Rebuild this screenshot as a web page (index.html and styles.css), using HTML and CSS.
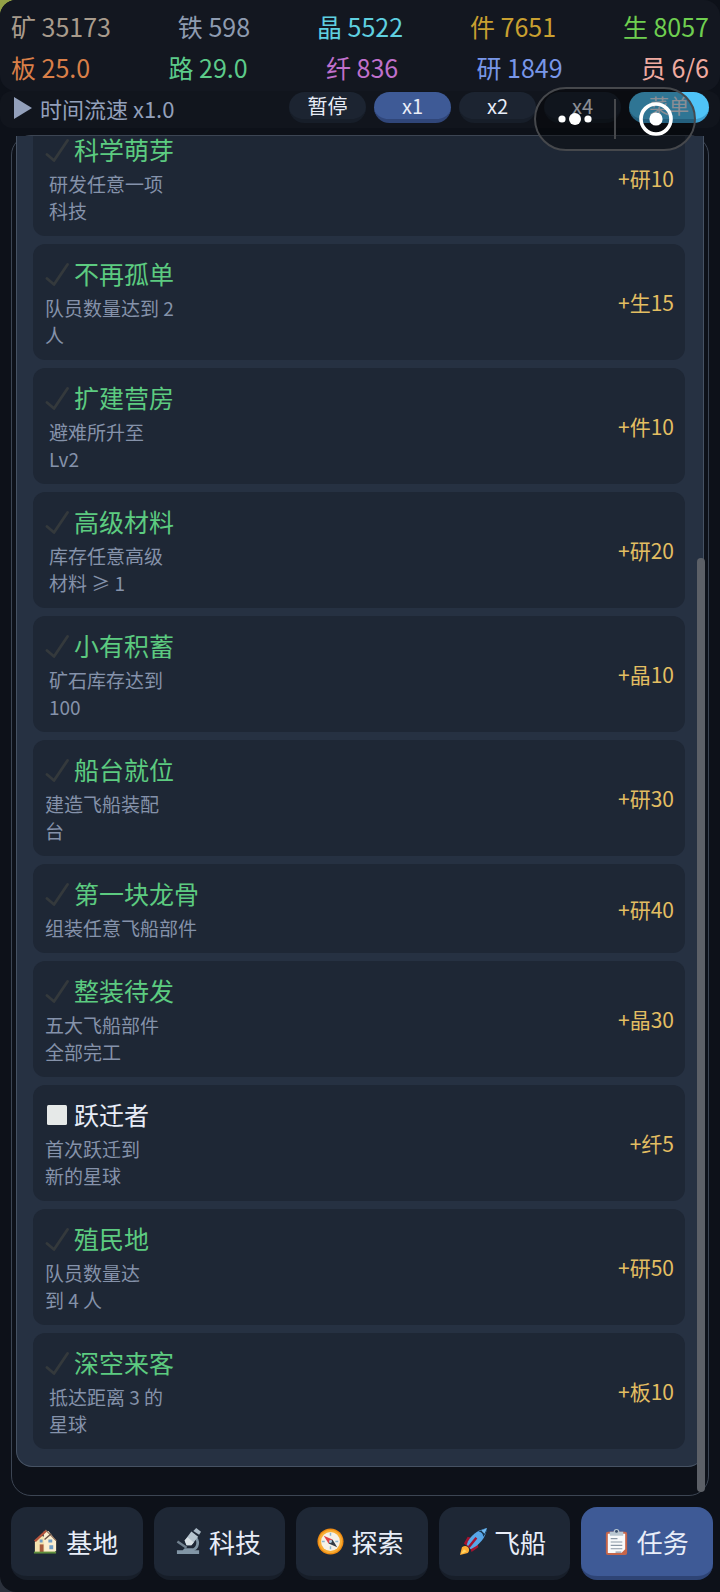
FILE: index.html
```html
<!DOCTYPE html>
<html lang="zh-CN">
<head>
<meta charset="utf-8">
<meta name="viewport" content="width=device-width, initial-scale=1">
<title>任务</title>
<link rel="stylesheet" href="styles.css">
</head>
<body>
<svg class="defs" aria-hidden="true">
  <symbol id="check" viewBox="0 0 24 24"><path d="M2 16.500 9 22.500 22.500 2.500" fill="none" stroke="#34393c" stroke-width="2.800" stroke-linejoin="round" stroke-linecap="round"/></symbol>
</svg>
<div class="app">
  <header class="resources">
    <div class="res-row">
      <span class="ore">矿 35173</span><span class="iron">铁 598</span><span class="crystal">晶 5522</span><span class="part">件 7651</span><span class="life">生 8057</span>
    </div>
    <div class="res-row">
      <span class="board">板 25.0</span><span class="circuit">路 29.0</span><span class="fiber">纤 836</span><span class="research">研 1849</span><span class="crew">员 6/6</span>
    </div>
  </header>
  <section class="speed">
    <div class="speed-label"><svg class="play" viewBox="0 0 18 22"><path d="M0 0 18 11 0 22Z" fill="#93a0bb"/></svg><span>时间流速 x1.0</span></div>
    <div class="speed-buttons">
      <button class="pill">暂停</button><button class="pill active">x1</button><button class="pill">x2</button><button class="pill">x4</button><button class="pill menu">菜单</button>
    </div>
  </section>

  <main class="panel">
    <div class="list">
      <article class="quest"><div><h2><svg class="tick"><use href="#check"/></svg>科学萌芽</h2><p class="inset">研发任意一项<br>科技</p></div><span class="reward">+研10</span></article>
      <article class="quest"><div><h2><svg class="tick"><use href="#check"/></svg>不再孤单</h2><p>队员数量达到 2<br>人</p></div><span class="reward">+生15</span></article>
      <article class="quest"><div><h2><svg class="tick"><use href="#check"/></svg>扩建营房</h2><p class="inset">避难所升至<br>Lv2</p></div><span class="reward">+件10</span></article>
      <article class="quest"><div><h2><svg class="tick"><use href="#check"/></svg>高级材料</h2><p class="inset">库存任意高级<br>材料 ≥ 1</p></div><span class="reward">+研20</span></article>
      <article class="quest"><div><h2><svg class="tick"><use href="#check"/></svg>小有积蓄</h2><p class="inset">矿石库存达到<br>100</p></div><span class="reward">+晶10</span></article>
      <article class="quest"><div><h2><svg class="tick"><use href="#check"/></svg>船台就位</h2><p>建造飞船装配<br>台</p></div><span class="reward">+研30</span></article>
      <article class="quest"><div><h2><svg class="tick"><use href="#check"/></svg>第一块龙骨</h2><p>组装任意飞船部件</p></div><span class="reward">+研40</span></article>
      <article class="quest"><div><h2><svg class="tick"><use href="#check"/></svg>整装待发</h2><p>五大飞船部件<br>全部完工</p></div><span class="reward">+晶30</span></article>
      <article class="quest open"><div><h2><svg class="tick" viewBox="0 0 24 24"><rect x="2" y="2" width="20" height="20" rx="1.500" fill="#e6e9e8"/></svg>跃迁者</h2><p>首次跃迁到<br>新的星球</p></div><span class="reward">+纤5</span></article>
      <article class="quest"><div><h2><svg class="tick"><use href="#check"/></svg>殖民地</h2><p>队员数量达<br>到 4 人</p></div><span class="reward">+研50</span></article>
      <article class="quest"><div><h2><svg class="tick"><use href="#check"/></svg>深空来客</h2><p class="inset">抵达距离 3 的<br>星球</p></div><span class="reward">+板10</span></article>
    </div>
    <div class="scrollbar"></div>
  </main>

  <nav class="tabs">
    <button class="tab"><svg viewBox="0 0 28 28"><path d="M3 14 10 8 24 14V25H3Z" fill="#f4e3b0"/><path d="M12 4 17 3 25 13V24H13Z" fill="#fbeed0"/><path d="M2 13 14 2 15.500 3.500 4 14.500Z" fill="#b5533c"/><path d="M14 2 25 13" stroke="#8d6a55" stroke-width="1.200"/><path d="M13 12 20 6" stroke="#6a5346" stroke-width="1.500"/><path d="M8 17h4v8H8Z" fill="#a65a3c"/><path d="M18 18h4v4h-4ZM8 12h3v3H8ZM17 12h4v3h-4Z" fill="#6f9cc4"/><path d="M2 24.500h23v2H2Z" fill="#5f8f3e"/></svg>基地</button>
    <button class="tab"><svg viewBox="0 0 28 28"><path d="M19.500 8C26 13 24 21 18 23" fill="none" stroke="#7f93a2" stroke-width="2.800"/><path d="M2 23h6l2-2h8l2 2h5v4H2Z" fill="#8296a6"/><path d="M2.500 14 12 20.500" stroke="#71818f" stroke-width="2.500"/><path d="M10 13 17 3.500 24 9 17 18 12 18Z" fill="#b6c4ce"/><path d="M10 13 13 9.500 19.500 15 17 18 12 18Z" fill="#d8e0e5"/><path d="M19 3 22 0 27 4 25 7Z" fill="#a9b8c4"/></svg>科技</button>
    <button class="tab"><svg viewBox="0 0 28 28"><circle cx="14" cy="14" r="13.500" fill="#f08c13"/><circle cx="14" cy="14" r="12" fill="#f9ae35"/><circle cx="14" cy="14" r="9.800" fill="#f5f1e8"/><path d="M14 5v18M5 14h18" stroke="#8cb7d0" stroke-width="1.500" stroke-dasharray="3 4"/><path d="M7 8 16 12 12 16Z" fill="#df4047"/><path d="M21 20 16 12 12 16Z" fill="#333c46"/><circle cx="14" cy="14" r="1.500" fill="#a8cbe0"/></svg>探索</button>
    <button class="tab"><svg viewBox="0 0 28 28"><path d="M4 16 8 9 14 11 9 20ZM12 25 19 20 18 14 10 19Z" fill="#a5122f"/><path d="M7 17C10 8 18 2 28 0 27 10 20 18 11 22Z" fill="#58a6e8"/><path d="M19 4C23 2 26 1 28 0 28 4 26 7 24 9 24 6 22 4 19 4Z" fill="#183650"/><path d="M28 0 22 2.500 25.500 6Z" fill="#72bbf4"/><path d="M9 20 17 10" stroke="#a5122f" stroke-width="2.500"/><path d="M0 28 2 20C7 16 12 22 8 26Z" fill="#ffad34"/><path d="M1 27 4 22 7 24Z" fill="#ffd863"/></svg>飞船</button>
    <button class="tab selected"><svg viewBox="0 0 28 28"><rect x="3" y="4" width="22" height="24" rx="2" fill="#c5654a"/><path d="M5 6H23V22L19 26H5Z" fill="#f8fafb"/><path d="M8 11h7M8 14.500h12M8 18h12M8 21.500h12M13 25h6" stroke="#8a98a6" stroke-width="1.200"/><path d="M7 4h4a3 3 0 0 1 6 0h4v4H7Z" fill="#b9c7d1"/><circle cx="14" cy="3.500" r="1.500" fill="#364b68"/></svg>任务</button>
  </nav>

  <div class="capsule">
    <button aria-label="更多"><svg class="dots" viewBox="0 0 34 12"><circle cx="4" cy="6" r="3.600"/><circle cx="17" cy="6" r="6"/><circle cx="30" cy="6" r="3.600"/></svg></button>
    <button aria-label="关闭"><svg class="target" viewBox="0 0 34 34"><circle cx="17" cy="17" r="15" fill="none" stroke="#fff" stroke-width="3.600"/><circle cx="17" cy="17" r="6.600"/></svg></button>
  </div>
</div>
</body>
</html>
```
FILE: styles.css
```css
* { box-sizing: border-box; }
html { background: linear-gradient(#92a046 0 50%, #2a303b 50%); }
body {
  margin: 0;
  font-family: "Noto Sans CJK SC", sans-serif;
  color: #e8edf8;
}
button {
  font: inherit;
  color: inherit;
  border: 0;
  padding: 0;
  background: none;
}
.defs { display: none; }
.app {
  position: relative;
  display: flex;
  flex-direction: column;
  min-height: 100vh;
  background: #0d1119;
  border-radius: 16px 0 0 16px;
}
.resources {
  padding: 6px 11px 3px;
  background: #131720;
  border-radius: 16px;
  font-size: 25px;
  line-height: 41px;
}
.res-row { display: flex; justify-content: space-between; }
.ore { color: #a89b8c; }
.iron { color: #8e9bb0; }
.crystal { color: #5fd0e0; }
.part { color: #c9a030; }
.life { color: #6fcf50; }
.board { color: #d97f48; }
.circuit { color: #5ccb8a; }
.fiber { color: #c070cc; }
.research { color: #7896e8; }
.crew { color: #f0aaa0; }

.speed {
  display: flex;
  justify-content: space-between;
  align-items: flex-start;
  height: 37px;
  padding: 1px 11px 0 14px;
  background: #11151d;
  border-radius: 12px;
}
.speed-label {
  display: flex;
  align-items: center;
  gap: 8px;
  color: #93a0bb;
  font-size: 22px;
  line-height: 32px;
}
.play { width: 18px; height: 22px; }
.speed-buttons { display: flex; gap: 8px; }
.pill {
  width: 77px;
  height: 31px;
  border-radius: 16px;
  background: #1c2431;
  border-bottom: 4px solid #171e29;
  font-size: 20px;
  line-height: 27px;
}
.pill.active { background: #3e5a96; border-color: #304679; }
.pill.menu { width: 80px; background: #4fc3f7; border-color: #3d9fd0; }

.panel {
  position: relative;
  flex: 1;
  display: flex;
  flex-direction: column;
  margin: 7px 11px 0;
  padding: 0 4px 27px;
  border: 1px solid #3c4553;
  border-radius: 20px;
}
.list {
  display: flex;
  flex-direction: column;
  gap: 8px;
  padding: 0 18px 17px 16px;
  background: #263142;
  border: 1px solid #465263;
  border-top: 0;
  border-radius: 0 0 16px 16px;
}
.quest {
  display: flex;
  justify-content: space-between;
  align-items: center;
  padding: 12px 11px 12px 12px;
  border-radius: 12px;
  background: #1e2735;
}
.quest:first-child { margin-top: -16px; clip-path: inset(16px 0 0 0); }
.quest h2 {
  display: flex;
  align-items: center;
  gap: 5px;
  margin: 0 0 3px;
  font-size: 25px;
  font-weight: 400;
  line-height: 35px;
  color: #5ccb80;
}
.quest.open h2 { color: #e8edf8; }
.tick { width: 24px; height: 24px; }
.quest p {
  margin: 0;
  font-size: 19px;
  line-height: 27px;
  color: #8592aa;
}
.quest .inset { padding-left: 4px; }
.reward { font-size: 21px; color: #e3be62; }
.scrollbar {
  position: absolute;
  right: 3px;
  top: 422px;
  bottom: 3px;
  width: 8px;
  border-radius: 4px;
  background: #5c6067;
}

.tabs {
  display: flex;
  gap: 11px;
  padding: 11px 7px 12px 11px;
}
.tab {
  flex: 1;
  display: flex;
  align-items: center;
  justify-content: center;
  gap: 7px;
  height: 73px;
  padding-right: 3px;
  border-radius: 16px;
  background: #1e2735;
  border-bottom: 4px solid #171e29;
  font-size: 26px;
}
.tab svg { width: 27px; height: 27px; }
.tab.selected { background: #3e5a96; border-color: #2e4475; }

.capsule {
  position: absolute;
  top: 87px;
  right: 24px;
  display: flex;
  width: 162px;
  height: 64px;
  border: 2px solid #46484c;
  border-radius: 32px;
  background: rgba(0, 0, 0, 0.4);
}
.capsule button {
  flex: 1;
  display: flex;
  align-items: center;
  justify-content: center;
}
.capsule button:first-child { padding-right: 4px; }
.capsule button + button::before {
  content: "";
  position: absolute;
  left: 78px;
  width: 2px;
  height: 40px;
  background: #46484c;
}
.capsule svg { fill: #fff; }
.dots { width: 34px; height: 12px; }
.target { width: 34px; height: 34px; }
```
